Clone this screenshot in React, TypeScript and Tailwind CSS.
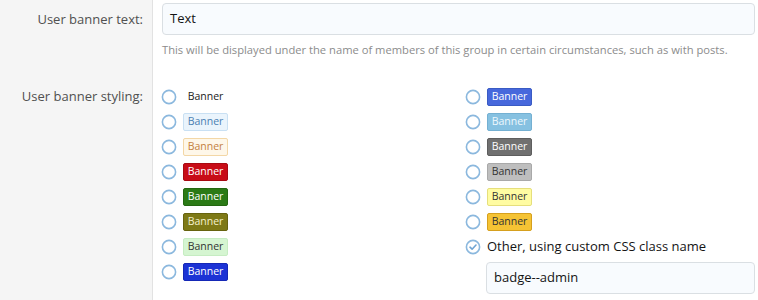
import React from "react";

type B = { cls: string };

const left: B[] = [
  { cls: "border-transparent bg-transparent text-[#222]" },
  { cls: "border-[#c9e0f3] bg-[#eaf4fc] text-[#4a80b2]" },
  { cls: "border-[#f3d7a6] bg-[#fef7e9] text-[#c4803f]" },
  { cls: "border-[#a70a12] bg-[#c80c17] text-white" },
  { cls: "border-[#236710] bg-[#2b7a16] text-white" },
  { cls: "border-[#67630f] bg-[#7e7916] text-[#f5f1cc]" },
  { cls: "border-[#c6ecc2] bg-[#d5f5d1] text-[#333]" },
  { cls: "border-[#1528b6] bg-[#1c33d5] text-white" },
];

const right: B[] = [
  { cls: "border-[#3a5bc4] bg-[#4768dc] text-white" },
  { cls: "border-[#74b0d2] bg-[#86c1e1] text-[#eef8fd]" },
  { cls: "border-[#5e5e5e] bg-[#707070] text-white" },
  { cls: "border-[#a9a9a9] bg-[#bebebe] text-[#333]" },
  { cls: "border-[#e6df7c] bg-[#fffca2] text-[#333]" },
  { cls: "border-[#d6a01e] bg-[#f5c334] text-[#333]" },
];

function Radio() {
  return (
    <svg width="16" height="16" viewBox="0 0 16 16" className="shrink-0">
      <circle cx="8" cy="8" r="6.6" fill="white" stroke="#8bb8de" strokeWidth="1.6" />
    </svg>
  );
}

function RadioChecked() {
  return (
    <svg width="16" height="16" viewBox="0 0 16 16" className="shrink-0">
      <circle cx="8" cy="8" r="6.6" fill="white" stroke="#8bb8de" strokeWidth="1.6" />
      <path d="M5 8.2 L7.1 10.2 L11 6" fill="none" stroke="#6fa4d3" strokeWidth="1.6" strokeLinecap="round" strokeLinejoin="round" />
    </svg>
  );
}

function Opt({ b }: { b: B }) {
  return (
    <div className="flex h-[25px] items-center gap-[6px]">
      <Radio />
      <span
        className={`inline-flex h-[18px] w-[45px] items-center justify-center rounded-[2px] border text-[10.5px] leading-none ${b.cls}`}
      >
        Banner
      </span>
    </div>
  );
}

export default function App() {
  return (
    <div
      className="flex h-[300px] w-[758px] flex-col overflow-hidden bg-white text-[13px]"
      style={{ fontFamily: '"Open Sans", "Noto Sans", sans-serif' }}
    >
      <div className="flex">
        <div className="w-[153px] shrink-0 border-r border-[#e2e2e2] bg-[#f5f5f5] pr-[9px] pt-[3px] text-right leading-[32px] text-[#505050]">
          User banner text:
        </div>
        <div className="flex-1 pl-[9px] pr-[3px] pt-[3px] pb-[13px]">
          <div className="flex h-[32px] items-center rounded-[4px] border border-[#dadfe3] bg-[#f8fbfe] px-[7px] text-[#141414]">
            Text
          </div>
          <div className="mt-[6px] whitespace-nowrap text-[11.2px] leading-[18px] text-[#8c8c8c]">
            This will be displayed under the name of members of this group in certain circumstances, such as with posts.
          </div>
        </div>
      </div>
      <div className="flex flex-1">
        <div className="w-[153px] shrink-0 border-r border-[#e2e2e2] bg-[#f5f5f5] pr-[9px] pt-[12px] text-right leading-[25px] text-[#505050]">
          User banner styling:
        </div>
        <div className="grid flex-1 grid-cols-[304px_1fr] pl-[8px] pr-[3px] pt-[12px]">
          <div className="flex flex-col">
            {left.map((b, i) => (
              <Opt key={i} b={b} />
            ))}
          </div>
          <div className="flex flex-col">
            {right.map((b, i) => (
              <Opt key={i} b={b} />
            ))}
            <div className="flex h-[25px] items-center gap-[6px] text-[#141414]">
              <RadioChecked />
              <span>Other, using custom CSS class name</span>
            </div>
            <div className="ml-[21px] mt-[3px] flex h-[32px] items-center rounded-[4px] border border-[#dadfe3] bg-[#f8fbfe] px-[7px] text-[#141414]">
              badge--admin
            </div>
          </div>
        </div>
      </div>
    </div>
  );
}
